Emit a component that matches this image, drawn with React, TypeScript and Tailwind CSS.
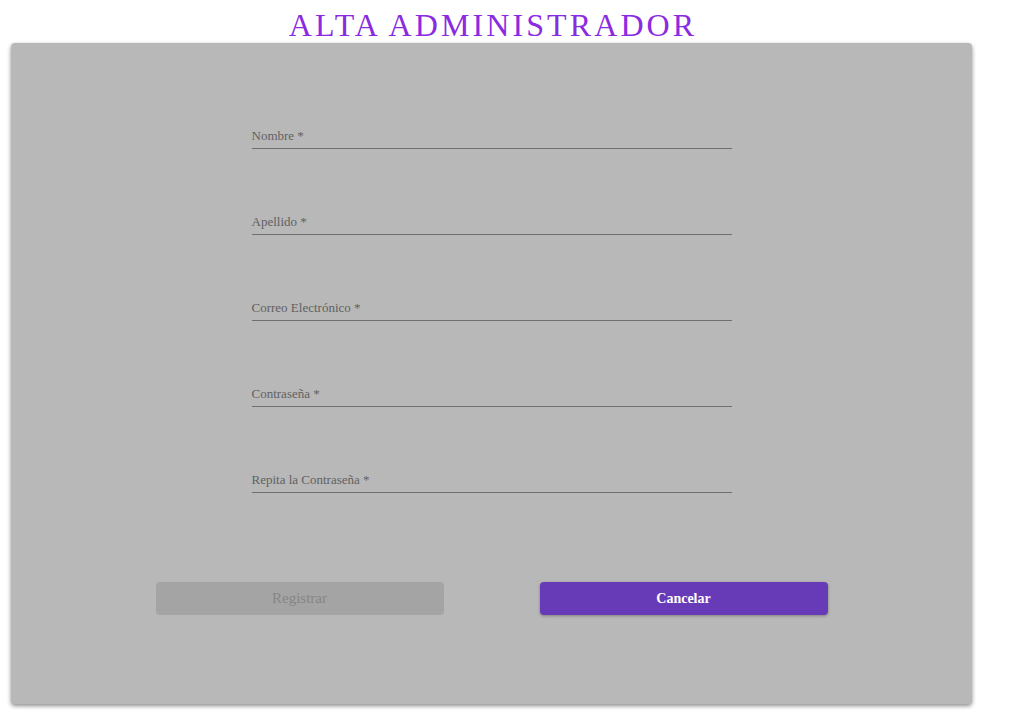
import React from "react";

const fields = [
  "Nombre *",
  "Apellido *",
  "Correo Electrónico *",
  "Contraseña *",
  "Repita la Contraseña *",
];

export default function App() {
  return (
    <div
      className="min-h-[724px] w-[1013px] bg-white"
      style={{ fontFamily: '"Liberation Serif", "Times New Roman", serif' }}
    >
      <div className="pt-[7px] pl-[11px] w-[975px]">
        <h1 className="text-center text-[32px] leading-[36px] tracking-[3.1px] text-[#8a2be2]">
          ALTA ADMINISTRADOR
        </h1>
      </div>
      <div className="ml-[11px] w-[961px] h-[661px] rounded-[4px] bg-[#b8b8b8] shadow-[0_2px_4px_rgba(0,0,0,0.45)] pt-[85px]">
        <div className="mx-auto flex w-[480px] flex-col gap-[65px]">
          {fields.map((f) => (
            <div key={f} className="border-b border-[#6f6f6f] pb-[4px]">
              <div className="text-[13px] leading-[16px] text-[#616161]">{f}</div>
            </div>
          ))}
        </div>
        <div className="mt-[89px] flex justify-center gap-[96px]">
          <button className="h-[33px] w-[288px] rounded-[4px] bg-[#a4a4a4] text-[15px] text-[#868686]">
            Registrar
          </button>
          <button className="h-[33px] w-[288px] rounded-[4px] bg-[#673ab7] text-[14px] font-bold text-white shadow-[0_1px_3px_rgba(0,0,0,0.3)]">
            Cancelar
          </button>
        </div>
      </div>
    </div>
  );
}
